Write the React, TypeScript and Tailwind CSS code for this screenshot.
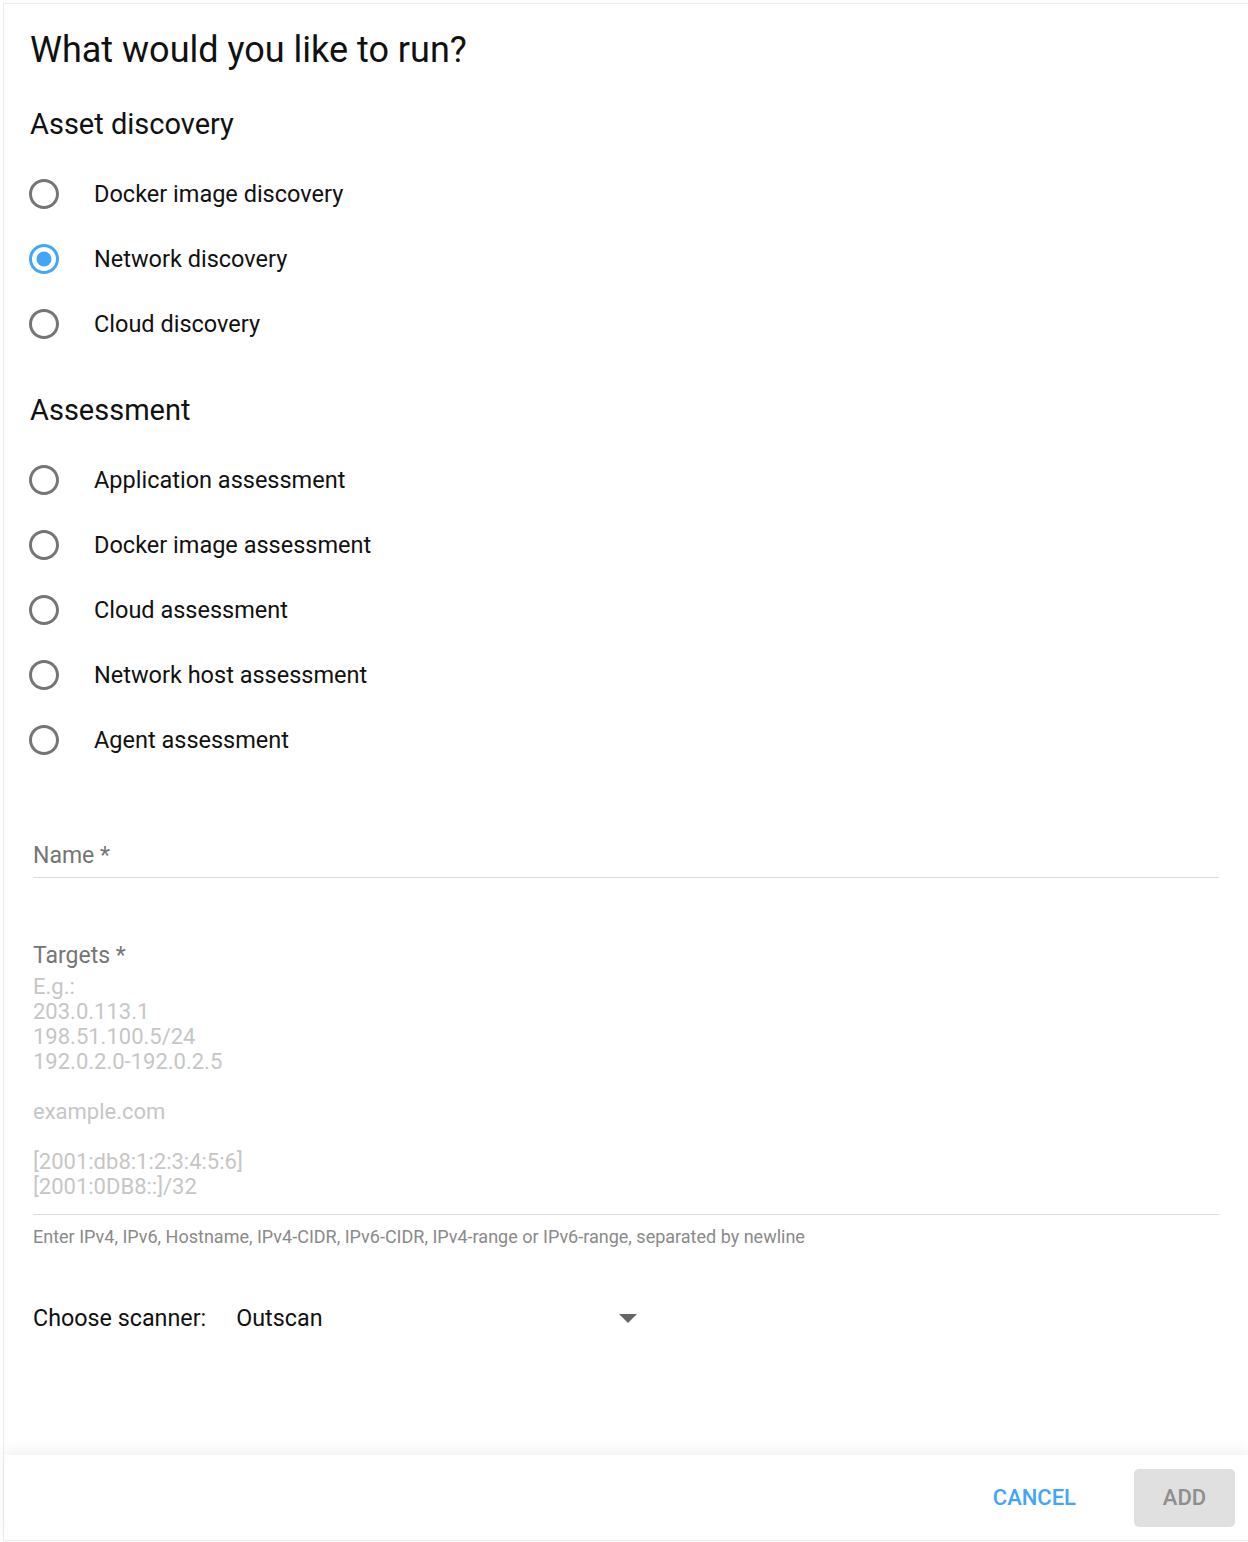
import { useState } from "react";

const discoveryOptions = ["Docker image discovery", "Network discovery", "Cloud discovery"];
const assessmentOptions = [
  "Application assessment",
  "Docker image assessment",
  "Cloud assessment",
  "Network host assessment",
  "Agent assessment",
];

const targetExamples = [
  "E.g.:",
  "203.0.113.1",
  "198.51.100.5/24",
  "192.0.2.0-192.0.2.5",
  "",
  "example.com",
  "",
  "[2001:db8:1:2:3:4:5:6]",
  "[2001:0DB8::]/32",
];

function RadioIcon({ checked }: { checked: boolean }) {
  return (
    <svg viewBox="0 0 24 24" className="w-[36px] h-[36px]" fill={checked ? "#42a5f5" : "#757575"}>
      <path d="M12 2C6.48 2 2 6.48 2 12s4.48 10 10 10 10-4.48 10-10S17.52 2 12 2zm0 18c-4.42 0-8-3.58-8-8s3.58-8 8-8 8 3.58 8 8-3.58 8-8 8z" />
      {checked && <circle cx="12" cy="12" r="5" />}
    </svg>
  );
}

function RadioRow({ label, checked, onSelect }: { label: string; checked: boolean; onSelect: () => void }) {
  return (
    <label className="flex items-center h-[65px] cursor-pointer" onClick={onSelect}>
      <span className="ml-[-4px]">
        <RadioIcon checked={checked} />
      </span>
      <span className="ml-[32px] text-[23.5px] leading-[28px] text-[#111]">{label}</span>
    </label>
  );
}

export default function App() {
  const [selected, setSelected] = useState("Network discovery");

  return (
    <div className="bg-white" style={{ fontFamily: "Roboto, 'Noto Sans', sans-serif" }}>
      <div className="ml-[3px] mt-[3px] h-[1538px] border-l border-t border-b border-[#ececec] flex flex-col">
        <div className="pl-[26px] pr-[28px]">
          <h1 className="mt-[25px] text-[36px] leading-[42px] text-[#111]">What would you like to run?</h1>

          <h2 className="mt-[35px] text-[29px] leading-[36px] text-[#111]">Asset discovery</h2>
          <div className="mt-[19px]">
            {discoveryOptions.map((o) => (
              <RadioRow key={o} label={o} checked={selected === o} onSelect={() => setSelected(o)} />
            ))}
          </div>

          <h2 className="mt-[36px] text-[29px] leading-[36px] text-[#111]">Assessment</h2>
          <div className="mt-[19px]">
            {assessmentOptions.map((o) => (
              <RadioRow key={o} label={o} checked={selected === o} onSelect={() => setSelected(o)} />
            ))}
          </div>

          <div className="ml-[3px] mr-[1px]">
            <div className="mt-[70px] pb-[7px] border-b border-[#dcdcdc]">
              <span className="text-[23px] leading-[28px] text-[#757575] block">Name *</span>
            </div>

            <div className="mt-[64px] pb-[15px] border-b border-[#dcdcdc]">
              <span className="text-[23px] leading-[28px] text-[#757575] block">Targets *</span>
              <div className="mt-[4px] text-[22px] leading-[25px] text-[#c6c6c6]">
                {targetExamples.map((t, i) => (
                  <div key={i} className="h-[25px]">
                    {t}
                  </div>
                ))}
              </div>
            </div>
            <p className="mt-[11px] text-[18px] leading-[22px] text-[#8a8a8a]">
              Enter IPv4, IPv6, Hostname, IPv4-CIDR, IPv6-CIDR, IPv4-range or IPv6-range, separated by newline
            </p>

            <div className="mt-[56px] flex items-center text-[23.3px] leading-[28px] text-[#111]">
              <span>Choose scanner:</span>
              <div className="ml-[30px] w-[409px] flex items-center justify-between">
                <span>Outscan</span>
                <svg viewBox="0 0 18 9" className="w-[18px] h-[9px] mr-[8px]" fill="#666">
                  <path d="M0 0h18L9 9z" />
                </svg>
              </div>
            </div>
          </div>
        </div>

        <div className="mt-auto h-[85px] flex items-center justify-end pr-[13px] shadow-[0_-6px_12px_rgba(0,0,0,0.05)]">
          <button className="h-[58px] px-[20px] mr-[38px] text-[22px] font-medium text-[#42a5f5]">
            CANCEL
          </button>
          <button className="h-[58px] w-[101px] rounded-[5px] bg-[#e0e0e0] text-[22px] font-medium text-[#8e8e8e]">
            ADD
          </button>
        </div>
      </div>
    </div>
  );
}
